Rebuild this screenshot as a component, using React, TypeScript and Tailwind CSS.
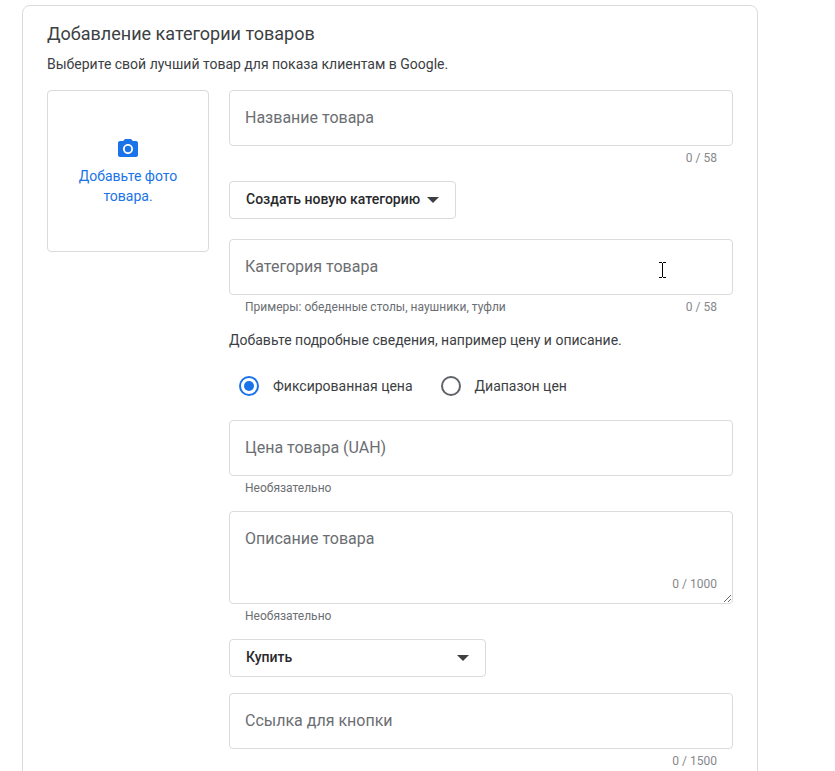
import { useId, useState } from 'react';
import { MdPhotoCamera } from 'react-icons/md';

type FieldProps = {
  label: string;
  hint?: string;
  max?: number;
};

const TextField = ({ label, hint, max }: FieldProps) => {
  const id = useId();
  const [value, setValue] = useState('');

  return (
    <div>
      <div className="relative">
        <input
          id={id}
          type="text"
          placeholder=" "
          maxLength={max}
          value={value}
          onChange={(e) => setValue(e.target.value)}
          className="peer block w-full h-14 px-[15px] border border-[#d9dbde] rounded bg-white text-base text-[#3c4043] focus:outline-none focus:border-[#1a73e8]"
        />
        <label
          htmlFor={id}
          className="absolute left-4 top-4 text-base leading-6 text-[#6b6e72] pointer-events-none peer-not-placeholder-shown:hidden"
        >
          {label}
        </label>
      </div>
      <div className="flex justify-between px-4 text-xs leading-[25px] text-[#6b6e72]">
        <span>{hint}</span>
        {max && (
          <span className="text-[#85888c]">
            {value.length} / {max}
          </span>
        )}
      </div>
    </div>
  );
};

const TextArea = ({ label, hint, max }: FieldProps) => {
  const id = useId();
  const [value, setValue] = useState('');

  return (
    <div>
      <div className="relative">
        <textarea
          id={id}
          placeholder=" "
          maxLength={max}
          value={value}
          onChange={(e) => setValue(e.target.value)}
          className="peer block w-full h-[93px] px-[15px] py-4 border border-[#d9dbde] rounded bg-white text-base text-[#3c4043] resize-y focus:outline-none focus:border-[#1a73e8]"
        />
        <label
          htmlFor={id}
          className="absolute left-4 top-4 text-base leading-6 text-[#6b6e72] pointer-events-none peer-not-placeholder-shown:hidden"
        >
          {label}
        </label>
        <span className="absolute right-4 bottom-2 text-xs leading-6 text-[#85888c] pointer-events-none">
          {value.length} / {max}
        </span>
      </div>
      <div className="px-4 text-xs leading-[25px] text-[#6b6e72]">{hint}</div>
    </div>
  );
};

type DropdownProps = {
  label: string;
  options: string[];
  className: string;
};

const Dropdown = ({ label, options, className }: DropdownProps) => (
  <div className={`relative max-w-full ${className}`}>
    <select
      aria-label={label}
      className="block appearance-none w-full h-[38px] pl-4 pr-8 pb-0.5 border border-[#d9dbde] rounded bg-white text-sm font-medium text-[#28292c] focus:outline-none focus:border-[#1a73e8]"
    >
      {options.map((option) => (
        <option key={option}>{option}</option>
      ))}
    </select>
    <svg
      viewBox="0 0 12 6"
      className="absolute right-[17px] top-4 w-3 h-[6px] text-[#3c4043] pointer-events-none"
    >
      <path d="M0 0h12L6 6z" fill="currentColor" />
    </svg>
  </div>
);

const PriceRadio = ({ label, defaultChecked }: { label: string; defaultChecked?: boolean }) => (
  <label className="flex items-center gap-[14px] text-sm text-[#3c4043]">
    <input
      type="radio"
      name="price"
      defaultChecked={defaultChecked}
      className="appearance-none grid place-content-center size-5 rounded-full border-2 border-[#5f6368] checked:border-[#1a73e8] before:size-[10px] before:rounded-full checked:before:bg-[#1a73e8]"
    />
    {label}
  </label>
);

const App = () => {
  return (
    <main className="h-screen overflow-hidden bg-white pt-[5px] pl-[22px] pr-[77px] font-['Roboto',sans-serif]">
      <form className="min-h-full px-6 pt-4 pb-10 border border-[#d9dbde] rounded-lg">
        <h1 className="text-lg leading-6 text-[#3c4043]">Добавление категории товаров</h1>
        <p className="mt-2 text-sm text-[#3c4043]">
          Выберите свой лучший товар для показа клиентам в Google.
        </p>

        <div className="flex items-start gap-5 mt-4">
          <button
            type="button"
            className="flex flex-col items-center justify-center shrink-0 size-[162px] px-5 border border-[#d9dbde] rounded text-sm text-[#1a73e8]"
          >
            <MdPhotoCamera className="size-6 mb-[5px]" />
            Добавьте фото товара.
          </button>

          <div className="flex-1 min-w-0">
            <TextField label="Название товара" max={58} />

            <Dropdown
              label="Категория"
              options={['Создать новую категорию']}
              className="w-[227px] mt-2.5 mb-5"
            />

            <div className="relative">
              <TextField
                label="Категория товара"
                hint="Примеры: обеденные столы, наушники, туфли"
                max={58}
              />
              <svg
                viewBox="0 0 7 16"
                className="absolute right-[67px] top-[23px] w-[7px] h-4 pointer-events-none"
                fill="none"
                stroke="#000"
                shapeRendering="crispEdges"
              >
                <path d="M0 .5h3M4 .5h3M3.5 1v14M0 15.5h3M4 15.5h3" />
              </svg>
            </div>

            <p className="mt-2.5 text-sm text-[#3c4043]">
              Добавьте подробные сведения, например цену и описание.
            </p>

            <div className="flex items-center gap-7 h-10 mt-4 mb-[14px] pl-[10px]">
              <PriceRadio label="Фиксированная цена" defaultChecked />
              <PriceRadio label="Диапазон цен" />
            </div>

            <TextField label="Цена товара (UAH)" hint="Необязательно" />

            <div className="mt-2.5">
              <TextArea label="Описание товара" hint="Необязательно" max={1000} />
            </div>

            <Dropdown
              label="Кнопка"
              options={['Купить', 'Подробнее', 'Заказать онлайн']}
              className="w-[257px] mt-2.5 mb-4"
            />

            <TextField label="Ссылка для кнопки" max={1500} />
          </div>
        </div>
      </form>
    </main>
  );
};

export default App;
